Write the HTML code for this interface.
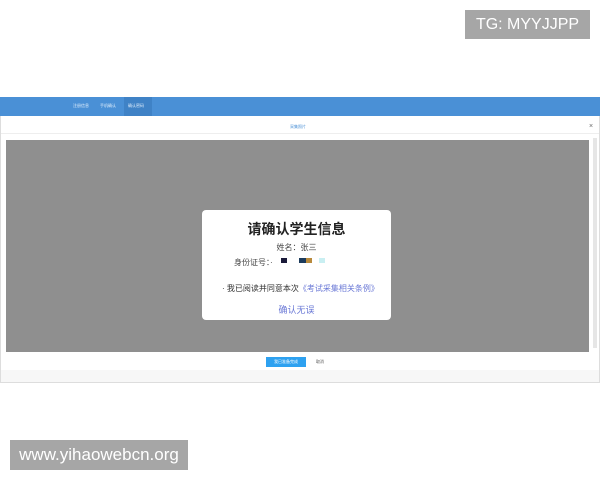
<!DOCTYPE html>
<html><head><meta charset="utf-8"><style>
*{margin:0;padding:0;box-sizing:border-box}
body{width:600px;height:480px;background:#fff;position:relative;overflow:hidden;font-family:"Liberation Sans","Noto Sans CJK SC",sans-serif}
.abs{position:absolute}
.wm{background:#a6a6a6;color:#fff;font-size:16px;display:flex;align-items:center;justify-content:center}
</style></head><body>
<div class="abs wm" style="left:465px;top:10px;width:125px;height:29px">TG: MYYJJPP</div>
<div class="abs wm" style="left:10px;top:440px;width:178px;height:30px;font-size:17px">www.yihaowebcn.org</div>

<div class="abs" style="left:0;top:97px;width:600px;height:19px;background:#4a90d6"></div>
<div class="abs" style="left:73px;top:103px;font-size:4px;color:#dfeefc">注册信息</div>
<div class="abs" style="left:100px;top:103px;font-size:4px;color:#dfeefc">手机确认</div>
<div class="abs" style="left:124px;top:97px;width:28px;height:19px;background:#3f82c6"></div>
<div class="abs" style="left:128px;top:103px;font-size:4px;color:#dfeefc">确认密码</div>

<div class="abs" style="left:0;top:116px;width:600px;height:267px;border:1px solid #ddd;border-top:none;background:#fff"></div>
<div class="abs" style="left:290px;top:124px;font-size:4px;color:#4a90d6">采集照片</div>
<div class="abs" style="left:589px;top:123px;font-size:7px;color:#666">×</div>
<div class="abs" style="left:1px;top:133px;width:598px;height:1px;background:#eee"></div>
<div class="abs" style="left:6px;top:140px;width:583px;height:212px;background:#8f8f8f"></div>
<div class="abs" style="left:593px;top:138px;width:4px;height:210px;background:#e6e6e6"></div>
<div class="abs" style="left:1px;top:370px;width:598px;height:12px;background:#f7f7f7"></div>

<div class="abs" style="left:202px;top:210px;width:189px;height:110px;background:#fff;border-radius:4px"></div>
<div class="abs" style="left:202px;top:219px;width:189px;text-align:center;font-size:14px;font-weight:bold;color:#222">请确认学生信息</div>
<div class="abs" style="left:202px;top:242px;width:189px;text-align:center;font-size:8px;color:#444">姓名：张三</div>
<div class="abs" style="left:234px;top:257px;font-size:8px;color:#444">身份证号：·</div>
<div class="abs" style="left:281px;top:258px;width:6px;height:5px;background:#1a1a3a"></div>
<div class="abs" style="left:299px;top:258px;width:7px;height:5px;background:#1c3b5c"></div>
<div class="abs" style="left:306px;top:258px;width:6px;height:5px;background:#b88a3c"></div>
<div class="abs" style="left:319px;top:258px;width:6px;height:5px;background:#c9eff2"></div>
<div class="abs" style="left:222px;top:283px;font-size:8px;color:#333">·&nbsp;我已阅读并同意本次<span style="color:#6a78d6">《考试采集相关条例》</span></div>
<div class="abs" style="left:202px;top:303px;width:189px;text-align:center;font-size:9px;color:#6a78d6">确认无误</div>

<div class="abs" style="left:266px;top:357px;width:40px;height:10px;background:#2ea1f0;color:#fff;font-size:4px;text-align:center;line-height:10px">我已准备完成</div>
<div class="abs" style="left:316px;top:359px;font-size:4px;color:#555">取消</div>
</body></html>
